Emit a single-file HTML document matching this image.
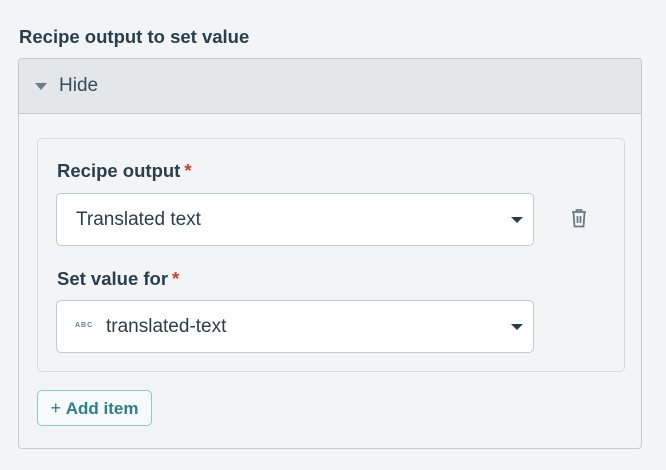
<!DOCTYPE html>
<html><head><style>
body{margin:0;width:666px;height:470px;background:#f3f4f6;font-family:"Liberation Sans",sans-serif;color:#2b3e4c;position:relative;overflow:hidden}
.a{position:absolute}
.title{left:19px;top:26px;font-size:18.5px;font-weight:bold}
.outer{left:18px;top:58px;width:624px;height:391px;border:1px solid #c2cad2;border-radius:4px;box-sizing:border-box}
.hdr{left:19px;top:59px;width:622px;height:54px;background:#e4e7ea;border-bottom:1px solid #c2cad2;border-radius:3px 3px 0 0}
.card{left:37px;top:138px;width:588px;height:234px;border:1px solid #d5dae0;border-radius:5px;box-sizing:border-box}
.lbl{font-size:18.5px;font-weight:bold}
.lbl span{color:#c8412b;margin-left:4px}
.sel{left:56px;width:478px;height:53px;background:#fff;border:1px solid #c2cad2;border-radius:5px;box-sizing:border-box;font-size:19px}
.car{width:0;height:0;border-left:6px solid transparent;border-right:6px solid transparent;border-top:6px solid #2b3e4c}
.btn{left:37px;top:390px;width:115px;height:36px;border:1px solid #8cc8cc;border-radius:5px;box-sizing:border-box;color:#2f7f8a;font-weight:bold;font-size:17px;line-height:34px;text-align:center;background:#f7fafa}
</style></head><body>
<div class="a title">Recipe output to set value</div>
<div class="a outer"></div>
<div class="a hdr"></div>
<div class="a" style="left:35px;top:83px;width:0;height:0;border-left:6px solid transparent;border-right:6px solid transparent;border-top:7px solid #6b7a86"></div>
<div class="a" style="left:59px;top:75px;font-size:19px;color:#3a4a56">Hide</div>
<div class="a card"></div>
<div class="a lbl" style="left:57px;top:160px">Recipe output<span>*</span></div>
<div class="a sel" style="top:193px"><div class="a" style="left:19px;top:15px">Translated text</div><div class="a car" style="left:454px;top:23px"></div></div>
<svg class="a" style="left:570px;top:208px" width="18" height="20" viewBox="0 0 18 20" fill="none" stroke="#6b7a86" stroke-width="1.8"><path d="M2 4h14M6.5 4V2h5v2M3.5 4.5l1 14h9l1-14M7.5 8v7M10.5 8v7"/></svg>
<div class="a lbl" style="left:57px;top:268px">Set value for<span>*</span></div>
<div class="a sel" style="top:300px"><div class="a" style="left:18px;top:21px;font-size:7px;letter-spacing:1px;color:#6b7a86;font-weight:bold">ABC</div><div class="a" style="left:49px;top:15px">translated-text</div><div class="a car" style="left:454px;top:23px"></div></div>
<div class="a btn"><span style="font-weight:normal;font-size:18px">+</span>&nbsp;Add item</div>
</body></html>
